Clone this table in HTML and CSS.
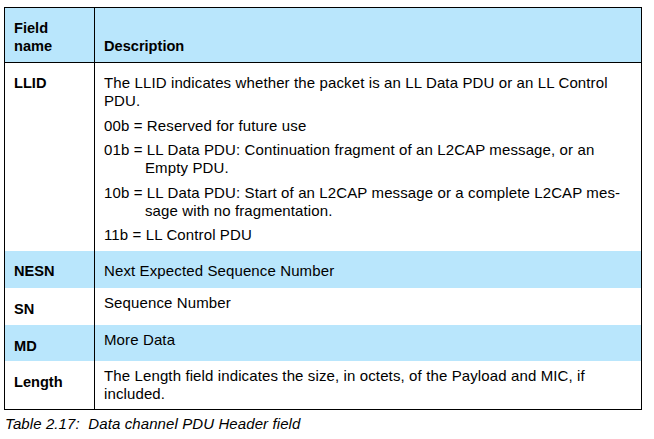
FILE: index.html
```html
<!DOCTYPE html>
<html>
<head>
<meta charset="utf-8">
<link rel="stylesheet" href="styles.css">
</head>
<body>
<div class="spec">
  <div class="cell name head blue">Field<br>name</div>
  <div class="cell desc head blue">Description</div>

  <div class="cell name r-llid">LLID</div>
  <div class="cell desc r-llid">
    <p>The LLID indicates whether the packet is an LL Data PDU or an LL Control PDU.</p>
    <p class="hang">00b = Reserved for future use</p>
    <p class="hang">01b = LL Data PDU: Continuation fragment of an L2CAP message, or an Empty PDU.</p>
    <p class="hang">10b = LL Data PDU: Start of an L2CAP message or a complete L2CAP mes-sage with no fragmentation.</p>
    <p class="hang">11b = LL Control PDU</p>
  </div>

  <div class="cell name blue">NESN</div>
  <div class="cell desc blue">Next Expected Sequence Number</div>

  <div class="cell name low">SN</div>
  <div class="cell desc high">Sequence Number</div>

  <div class="cell name blue low">MD</div>
  <div class="cell desc blue high">More Data</div>

  <div class="cell name low">Length</div>
  <div class="cell desc high">The Length field indicates the size, in octets, of the Payload and MIC, if included.</div>
</div>
<p class="caption">Table 2.17:&nbsp; Data channel PDU Header field</p>
</body>
</html>
```

FILE: styles.css
```css
html, body {
  margin: 0;
  padding: 0;
  background: #ffffff;
}

body {
  padding: 7px 0 0 4px;
  font-family: "Liberation Sans", Arial, sans-serif;
  font-size: 15px;
  letter-spacing: 0.12px;
  line-height: 18px;
  color: #000;
}

.spec {
  box-sizing: border-box;
  width: 638px;
  border: 1px solid #000;
  display: grid;
  grid-template-columns: 90px 1fr;
  grid-template-rows: 55px 188px 37px 37px 36px 48px;
}

.cell {
  box-sizing: border-box;
  padding: 11px 9px 0 9px;
}

.name {
  border-right: 1px solid #000;
  font-weight: bold;
  font-size: 14.6px;
  letter-spacing: 0;
}

.desc {
  padding-right: 17px;
}

.blue {
  background: #b9e6fc;
}

.head {
  border-bottom: 1px solid #000;
  font-weight: bold;
  font-size: 14.6px;
  letter-spacing: 0;
  display: flex;
  flex-direction: column;
  justify-content: flex-end;
  padding-bottom: 7px;
}

.low {
  padding-top: 12px;
}

.high {
  padding-top: 6px;
}

.desc p {
  margin: 0 0 6.5px 0;
}

.desc .hang {
  padding-left: 41px;
  text-indent: -41px;
}

.caption {
  margin: 5px 0 0 1px;
  font-style: italic;
  letter-spacing: 0.1px;
}
```
